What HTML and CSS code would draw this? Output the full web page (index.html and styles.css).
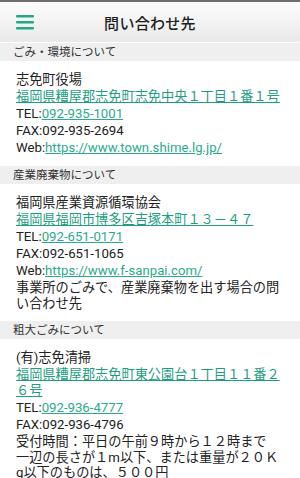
FILE: index.html
```html
<!DOCTYPE html>
<html>
    <head>
        <meta charset="utf-8">
        <link rel="stylesheet" href="styles.css">
    </head>
    <body>
        <div class="topline"></div>
        <div class="header">
            <div class="menu-btn">
                <svg width="18" height="15" viewBox="0 0 18 15">
                    <rect x="0" y="0" width="18" height="2.6" rx="1" fill="#24a784"/>
                    <rect x="0" y="6" width="18" height="2.6" rx="1" fill="#24a784"/>
                    <rect x="0" y="12" width="18" height="2.6" rx="1" fill="#24a784"/>
                </svg>
            </div>
            <h1 class="title">問い合わせ先</h1>
        </div>

        <!-- ごみ・環境 -->
        <div class="section-head">ごみ・環境について</div>
        <div class="section-body">
            <p>志免町役場</p>
            <p><a href="#">福岡県糟屋郡志免町志免中央１丁目１番１号</a></p>
            <p>TEL:<a href="#" class="thin">092-935-1001</a></p>
            <p>FAX:092-935-2694</p>
            <p>Web:<a href="#" class="thin">https://www.town.shime.lg.jp/</a></p>
        </div>

        <!-- 産業廃棄物 -->
        <div class="section-head">産業廃棄物について</div>
        <div class="section-body">
            <p>福岡県産業資源循環協会</p>
            <p><a href="#">福岡県福岡市博多区吉塚本町１３－４７</a></p>
            <p>TEL:<a href="#" class="thin">092-651-0171</a></p>
            <p>FAX:092-651-1065</p>
            <p>Web:<a href="#" class="thin">https://www.f-sanpai.com/</a></p>
            <p class="note">事業所のごみで、産業廃棄物を出す場合の問い合わせ先</p>
        </div>

        <!-- 粗大ごみ -->
        <div class="section-head">粗大ごみについて</div>
        <div class="section-body">
            <p>(有)志免清掃</p>
            <p><a href="#">福岡県糟屋郡志免町東公園台１丁目１１番２６号</a></p>
            <p>TEL:<a href="#" class="thin">092-936-4777</a></p>
            <p>FAX:092-936-4796</p>
            <p class="note">受付時間：平日の午前９時から１２時まで<br>一辺の長さが１m以下、または重量が２０Ｋg以下のものは、５００円</p>
        </div>
    </body>
</html>
```

FILE: styles.css
```css
body {
    margin: 0;
    background-color: #ffffff;
    font-family: Roboto, "Noto Sans CJK JP", sans-serif;
    color: #222222;
    overflow: hidden;
}

.topline {
    height: 2px;
    background-color: #6f6f6f;
}

    /*title bar*/

.header {
    height: 40px;
    display: flex;
    align-items: center;
    justify-content: center;
    position: relative;
    background: linear-gradient(#fdfdfd, #e9e9e9);
}

.menu-btn {
    position: absolute;
    left: 16px;
    top: 13px;
    height: 15px;
}

.title {
    margin: 0;
    font-size: 15px;
    font-weight: 500;
    color: #1e1e1e;
    letter-spacing: 0.3px;
}

    /*grey band*/

.section-head {
    margin-top: 1px;
    height: 18px;
    line-height: 18px;
    padding-left: 13px;
    font-size: 11.5px;
    background-color: #efefef;
    color: #333333;
}

.section-body {
    padding: 11px 18px 8px 16px;
}

.section-body p {
    margin: 0 0 1px 0;
    font-size: 13.2px;
    line-height: 16px;
}

.section-body p.note {
    line-height: 15.5px;
}

a {
    color: #1f9e7f;
    text-decoration: underline;
}

a.thin {
    color: #2bab8b;
}
```
